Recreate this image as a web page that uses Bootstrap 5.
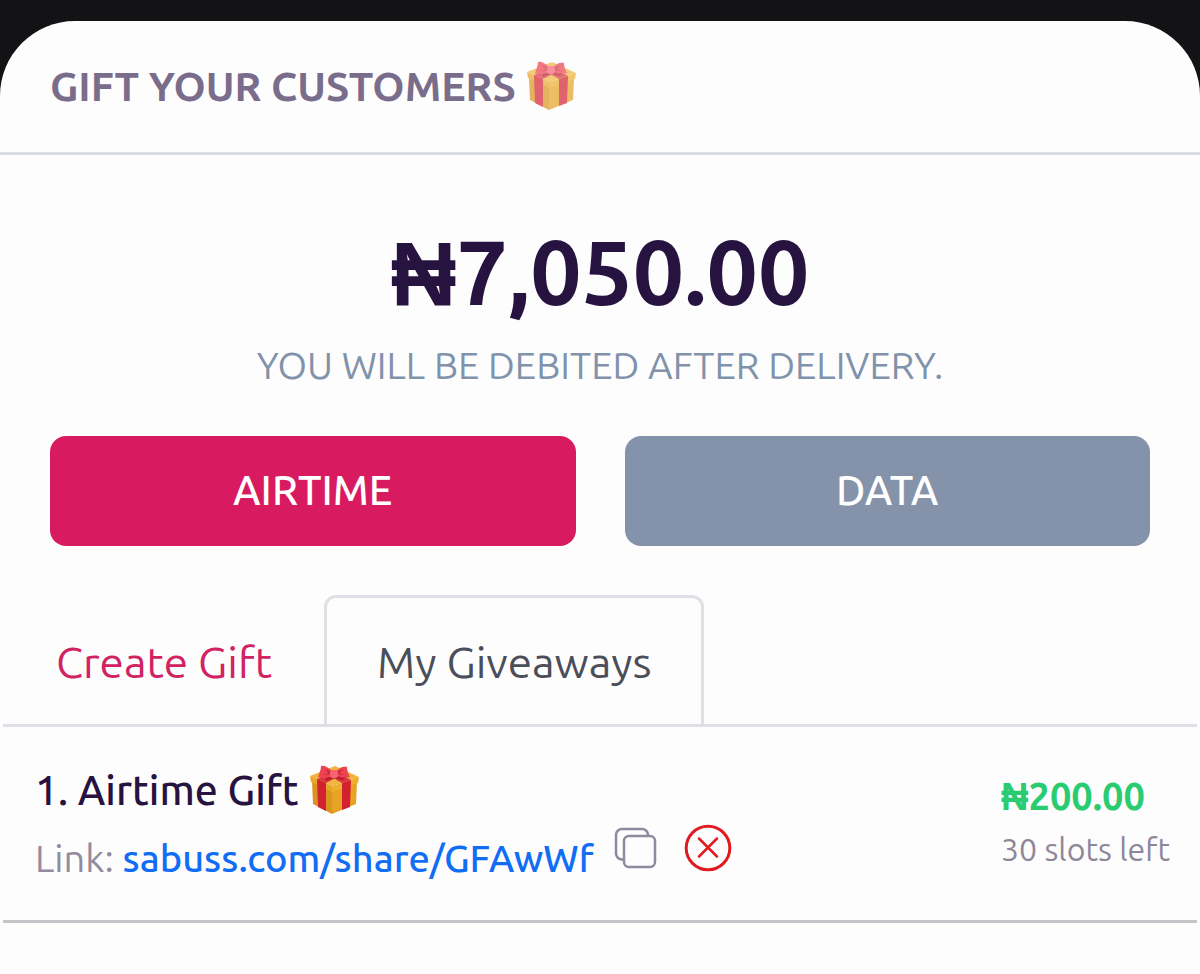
<!DOCTYPE html>
<html lang="en">
<head>
<meta charset="utf-8">
<meta name="viewport" content="width=device-width, initial-scale=1">
<title>Gift your customers</title>
<link href="https://cdn.jsdelivr.net/npm/bootstrap@5.3.0/dist/css/bootstrap.min.css" rel="stylesheet">
<style>
  body { background: #131315; font-family: Ubuntu, "Noto Sans", sans-serif; color: #27133f; }
  .sheet { background: #fdfdfd; margin-top: 21px; border-radius: 75px 75px 0 0; }
  .sheet-head { height: 134px; padding: 0 50px 2px; border-bottom: 3px solid #dadce3; gap: 10px; }
  .sheet-title { font-size: 41px; line-height: 48px; font-weight: 700; color: #7a6d8c; }
  .gift { width: 52px; height: 52px; }
  .faded { opacity: .7; }
  .summary { padding: 60px 50px 49px; }
  .total { font-size: 91px; line-height: 112px; font-weight: 700; }
  .naira { font-family: "Liberation Sans", Arial, sans-serif; }
  .note { font-size: 38px; line-height: 48px; color: #8192ab; margin: 11px 0 47px; }
  .kinds { gap: 49px; }
  .kind { flex: 1 1 0; height: 110px; border: 0; border-radius: 16px; font-size: 41px; font-weight: 500; color: #fff; }
  .kind-air, .kind-air:hover { background: #d81b60; color: #fff; }
  .kind-data, .kind-data:hover { background: #8493aa; color: #fff; }
  .panel { padding: 0 3px; }
  .gift-tabs { --bs-nav-tabs-border-width: 3px; --bs-nav-tabs-border-color: #dee0e6; --bs-nav-tabs-border-radius: 12px;
    --bs-nav-tabs-link-active-border-color: #dee0e6; --bs-nav-tabs-link-active-bg: #fdfdfd; --bs-nav-tabs-link-active-color: #4b4e59;
    --bs-nav-link-color: #d12262; --bs-nav-link-hover-color: #d12262; --bs-nav-link-font-weight: 400; }
  .gift-tabs .nav-link { font-size: 44px; line-height: 60px; padding: 34px 49px 32px 50px; }
  .entry { padding: 31px 30px 26px 32px; border-bottom: 3px solid #c4c5c8; }
  .entry-name { font-size: 41px; line-height: 64px; font-weight: 500; gap: 10px; }
  .entry-link { font-size: 38px; line-height: 72px; color: #928b9f; }
  .entry-link a { color: #126df5; font-weight: 500; text-decoration: none; }
  .icon-btn { line-height: 0; margin-bottom: 20px; }
  .copy-btn { margin-left: 18px; }
  .drop-btn { margin-left: 26px; }
  .entry-side { width: 166px; padding-top: 14px; }
  .price { font-size: 38px; line-height: 48px; font-weight: 700; color: #2bcb72; }
  .slots { font-size: 32px; line-height: 56px; color: #8e8799; white-space: nowrap; }
</style>
</head>
<body>
<svg class="d-none" aria-hidden="true">
  <symbol id="gift" viewBox="0 0 52 52">
    <path fill="#d9951f" d="m3 17 20 9v24L4 40z"/>
    <path fill="#e6a324" d="m23 26 25-8-1 22-24 10z"/>
    <path fill="#f0b540" d="M1 12 26 2l24 11-27 9z"/>
    <path fill="#e8a52a" d="m1 12 22 10v6L2 18z"/>
    <path fill="#f0ae2e" d="m23 22 27-9-1 6-26 9z"/>
    <path fill="#d3222f" d="m8 15 9 4v28l-8-4zM33 19l9-3-1 27-8 3z"/>
    <path fill="#dc3440" d="m8 15 22-9 6 3-19 10zM42 16l-9 3-14-8 8-3z"/>
    <path fill="#b81f2d" d="m16 14 9-2 12 1-3 3-9-2-8 3z"/>
    <path fill="#ee4251" d="M23 7C19 3 15 1 12 2c0 4-2 8-3 11 5 2 11 1 15-2z"/>
    <path fill="#ee4251" d="M27 7c4-4 8-5 11-4 0 3 1 7 3 10-5 1-10 1-14-2z"/>
    <path fill="#c52a3c" d="m23 8-8-3 5 4-6 2 9-1zM27 8l8-3-5 4 6 2-9-1z"/>
    <rect fill="#f76370" x="21" y="6" width="8" height="8" rx="3"/>
  </symbol>
</svg>

<main class="sheet pb-5 min-vh-100">
  <header class="sheet-head d-flex align-items-center">
    <h1 class="sheet-title mb-0">GIFT YOUR CUSTOMERS</h1>
    <svg class="gift faded" role="img" aria-label="Gift"><use href="#gift"/></svg>
  </header>

  <section class="summary text-center">
    <div class="total"><span class="naira">₦</span>7,050.00</div>
    <p class="note">YOU WILL BE DEBITED AFTER DELIVERY.</p>
    <div class="kinds d-flex">
      <button type="button" class="btn kind kind-air">AIRTIME</button>
      <button type="button" class="btn kind kind-data">DATA</button>
    </div>
  </section>

  <section class="panel">
    <ul class="nav nav-tabs gift-tabs">
      <li class="nav-item"><a class="nav-link" href="#create">Create Gift</a></li>
      <li class="nav-item"><a class="nav-link active" aria-current="page" href="#giveaways">My Giveaways</a></li>
    </ul>
    <article class="entry d-flex justify-content-between" id="giveaways">
      <div>
        <div class="entry-name d-flex align-items-center">1. Airtime Gift
          <svg class="gift" role="img" aria-label="Gift"><use href="#gift"/></svg>
        </div>
        <div class="entry-link d-flex">
          <span>Link: <a href="#share">sabuss.com/share/GFAwWf</a></span>
          <button type="button" class="btn icon-btn copy-btn border-0 p-0" aria-label="Copy link">
            <svg width="46" height="46" viewBox="0 0 46 46" fill="none" stroke="#918a9f" stroke-width="2.500">
              <path d="M11 34.500h-1a6 6 0 0 1-6-6V10a6 6 0 0 1 6-6h20a6 6 0 0 1 6 6v1"/>
              <rect x="12" y="11" width="31" height="31" rx="5"/>
            </svg>
          </button>
          <button type="button" class="btn icon-btn drop-btn border-0 p-0" aria-label="Remove gift">
            <svg width="48" height="48" viewBox="0 0 48 48" fill="none" stroke="#e21b20" stroke-width="3" stroke-linecap="round">
              <circle cx="24" cy="24" r="21.800"/><path stroke-width="2.500" d="m15 14.500 18 18M33 14.500l-18 18"/>
            </svg>
          </button>
        </div>
      </div>
      <div class="entry-side">
        <div class="price"><span class="naira">₦</span>200.00</div>
        <div class="slots">30 slots left</div>
      </div>
    </article>
  </section>
</main>
<script src="https://cdn.jsdelivr.net/npm/bootstrap@5.3.0/dist/js/bootstrap.bundle.min.js"></script>
</body>
</html>
